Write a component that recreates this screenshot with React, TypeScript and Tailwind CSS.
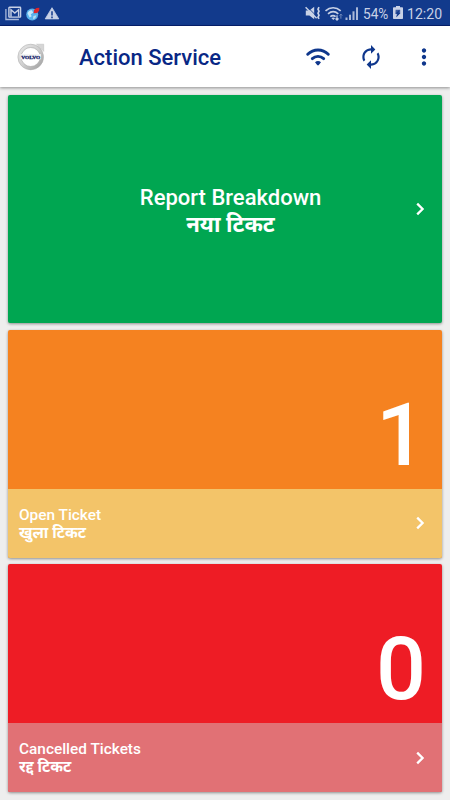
import type { ReactNode } from "react";
import { MdAutorenew, MdMoreVert } from "react-icons/md";

interface TicketCardProps {
  title: string;
  subtitle: string;
  count: number;
  color: string;
  footerColor: string;
}

const Chevron = () => (
  <svg width="10" height="14" viewBox="0 0 10 14" fill="none" className="shrink-0" aria-hidden>
    <path d="M2.2 1.6 7.6 7 2.2 12.4" stroke="white" strokeWidth="2.3" />
  </svg>
);

const WifiIcon = () => (
  <svg width="26" height="20" viewBox="0 0 26 20" fill="none" aria-hidden>
    <g stroke="#0f378c" strokeWidth="2.9" strokeLinecap="round">
      <path d="M2.7 7.2C8.5 1.5 17.5 1.5 23.3 7.2" />
      <path d="M7.3 11.6C10.6 8.6 15.4 8.6 18.7 11.6" />
    </g>
    <path d="M10 15.2c1.8-1.7 4.2-1.7 6 0l-2.2 2.9q-.8.9-1.6 0z" fill="#0f378c" />
  </svg>
);

const VolvoLogo = () => (
  <svg width="28" height="28" viewBox="0 0 28 28" aria-hidden>
    <defs>
      <linearGradient id="metal" x1="0" y1="0" x2="1" y2="1">
        <stop offset="0" stopColor="#e6e6e6" />
        <stop offset="0.5" stopColor="#cfcfcf" />
        <stop offset="1" stopColor="#a0a0a0" />
      </linearGradient>
    </defs>
    <path d="M19.5 1.2h7.2v7.2l-2.2-2.3-2.8 2.7-2.6-2.6 2.7-2.8z" fill="#d6d6d6" stroke="#bbb" strokeWidth="0.5" />
    <circle cx="13.7" cy="14" r="11.2" fill="white" stroke="url(#metal)" strokeWidth="3.4" />
    <circle cx="13.7" cy="14" r="12.8" fill="none" stroke="#adadad" strokeWidth="0.5" />
    <circle cx="13.7" cy="14" r="9.5" fill="none" stroke="#999" strokeWidth="0.5" />
    <rect x="3.5" y="11.1" width="20.4" height="5.2" fill="#f4f4f4" />
    <text
      x="13.7"
      y="15.6"
      textAnchor="middle"
      textLength="19"
      lengthAdjust="spacingAndGlyphs"
      fontSize="4.6"
      fontWeight="700"
      fontFamily="Liberation Serif, serif"
      fill="#17246c"
      stroke="#17246c"
      strokeWidth="0.3"
    >
      VOLVO
    </text>
  </svg>
);

const NotificationIcons = () => (
  <svg width="56" height="18" viewBox="0 -0.7 56 18" fill="none" aria-hidden>
    {/* stacked mail */}
    <path d="M.9 3.2v10.6h13" stroke="#a7b7d9" strokeWidth="1.3" />
    <rect x="3.9" y="1.6" width="11.7" height="9.8" rx="0.6" stroke="#c8d1e6" strokeWidth="1.4" />
    <path d="M6 11V4l3.8 3.4L13.6 4v7" stroke="#c8d1e6" strokeWidth="1.4" />
    {/* globe with marker */}
    <circle cx="27.2" cy="8.7" r="6" fill="#58b2eb" />
    <path d="M22.5 7.6c1-2.8 3.2-3.5 4.5-3l1.2 2.4-2.5 1.6 1 2-2.1 1.3z" fill="#c3e8fb" />
    <path d="m28.4 10.2 3-.6-1.1 3-2.3 1z" fill="#b4dcf1" />
    <path d="m28.6 7.6.4-3.4 2.5-2 2.9-.2-.3 3-2 2.4z" fill="#db262b" />
    {/* alert */}
    <path d="M47 2 53.8 13.2H40.2z" fill="#c8d1e6" stroke="#c8d1e6" strokeWidth="0.8" strokeLinejoin="round" />
    <path d="M47 5.6v4.2M47 10.9v1.6" stroke="#123a8c" strokeWidth="1.5" />
  </svg>
);

const SignalIcons = () => (
  <svg width="54" height="18" viewBox="0 -0.7 54 18" fill="none" aria-hidden>
    {/* muted, vibrating speaker */}
    <path d="M.8 4.8h3.6L9.2 1v12.6L4.4 9.8H.8z" fill="#c8d1e6" />
    <path d="m2 .9 10.4 10.4" stroke="#123a8c" strokeWidth="0.9" />
    <path d="m.6 1.6 11 11" stroke="#c8d1e6" strokeWidth="1.5" />
    <path d="M14 1.5l-1 2 1 2-1 2 1 2-1 2 1 1.7" stroke="#c8d1e6" strokeWidth="1.7" />
    {/* wifi with transfer arrows */}
    <g stroke="#c8d1e6" strokeWidth="1.6">
      <path d="M20.5 5.1C25.1 1 31.2 1 35.7 5.1" />
      <path d="M23 8.1c3.1-2.7 7.2-2.7 10.3 0" />
      <path d="M25.3 11c1.7-1.3 3.7-1.3 5.3 0" />
    </g>
    <path d="m26.3 12.4 2 2 1.8-1.8c-1-1-2.6-1-3.8-.2z" fill="#c8d1e6" />
    <path d="M32 9.6v4.8m-1.5-1.6 1.5 1.6 1.5-1.6" stroke="#c8d1e6" strokeWidth="1.2" />
    <path d="M35.9 13V8.5m-1.3 1.3 1.3-1.4 1.3 1.4" stroke="#7189bb" />
    {/* mobile signal */}
    <g fill="#aab8d8">
      <rect x="40.5" y="11.8" width="2" height="2.5" />
      <rect x="44" y="9" width="2" height="5.3" />
      <rect x="47.5" y="5.6" width="2" height="8.7" />
      <rect x="51" y="1.6" width="2" height="12.7" />
    </g>
  </svg>
);

const BatteryIcon = () => (
  <svg width="10" height="14" viewBox="0 0 10 15" preserveAspectRatio="none" aria-hidden>
    <path d="M3 0h4v1.4h2.2q.8 0 .8.8v11q0 .8-.8.8H.8q-.8 0-.8-.8v-11q0-.8.8-.8H3z" fill="#c8d1e6" />
    <path d="M2.6 4h4.6v3.4L3.2 12l.7-3.7H2.4z" fill="#3c5b9f" />
    <path d="m6.4 4-4 4.2h2.3L3.3 12l4.2-4.6H5.5z" fill="#123a8c" />
  </svg>
);

const StatusBar = () => (
  <div className="flex h-[26px] shrink-0 justify-between border-b border-[#06206f] bg-[#123a8c] pl-[5px] pr-[7px] pt-[5px] text-[#c8d1e6]">
    <NotificationIcons />
    <div className="flex text-[15.5px] leading-[18px]">
      <SignalIcons />
      <span className="ml-1 w-[26px] origin-left scale-x-[0.88] whitespace-nowrap">54%</span>
      <span className="ml-[4px] pt-[1px]">
        <BatteryIcon />
      </span>
      <span className="ml-[4px] w-[36px] origin-left scale-x-[0.91] whitespace-nowrap">12:20</span>
    </div>
  </div>
);

const AppBar = () => (
  <header className="z-10 flex h-[61px] shrink-0 items-center bg-white pl-[17px] text-[#0f378c] shadow-[0_1px_3px_rgba(0,0,0,0.4)]">
    <VolvoLogo />
    <h1 className="ml-[34px] w-[226px] pt-[3px] text-[22px] font-medium leading-7 text-[#082785]">Action Service</h1>
    <WifiIcon />
    <MdAutorenew className="ml-[26.5px] size-[26px]" />
    <MdMoreVert className="ml-[27px] size-[26px]" />
  </header>
);

const Card = ({ children, className }: { children: ReactNode; className: string }) => (
  <section className={`h-[228px] shrink-0 overflow-hidden rounded-[2px] shadow-[0_1px_3px_rgba(0,0,0,0.4)] ${className}`}>
    {children}
  </section>
);

const TicketCard = ({ title, subtitle, count, color, footerColor }: TicketCardProps) => (
  <Card className={`flex flex-col ${color}`}>
    <div className="flex h-[159px] items-end justify-end pr-[16px]">
      <span className="mb-[2px] text-[88px] font-medium leading-[104px]">{count}</span>
    </div>
    <div className={`flex flex-1 items-center justify-between pl-[11px] pr-[17px] ${footerColor}`}>
      <div className="pt-[1.5px] text-[15.4px] font-medium leading-[18px]">
        <h2>{title}</h2>
        <p className="font-bold">{subtitle}</p>
      </div>
      <Chevron />
    </div>
  </Card>
);

export default function App() {
  return (
    <div className="flex h-[800px] w-[450px] flex-col overflow-hidden bg-[#eeeeee] font-['Roboto','Noto_Sans_Devanagari','Noto_Sans',sans-serif] text-white">
      <StatusBar />
      <AppBar />
      <main className="flex flex-col gap-[6.5px] px-2 pt-2">
        <Card className="flex items-center bg-[#00a651] pl-[38px] pr-[17px]">
          <div className="flex-1 pt-[3px] text-center text-[22px] font-medium leading-[26px]">
            <h2>Report Breakdown</h2>
            <p className="text-[22.2px] font-bold">नया टिकट</p>
          </div>
          <Chevron />
        </Card>
        <TicketCard title="Open Ticket" subtitle="खुला टिकट" count={1} color="bg-[#f58220]" footerColor="bg-[#f3c469]" />
        <TicketCard title="Cancelled Tickets" subtitle="रद्द टिकट" count={0} color="bg-[#ee1c25]" footerColor="bg-[#e17175]" />
      </main>
    </div>
  );
}
